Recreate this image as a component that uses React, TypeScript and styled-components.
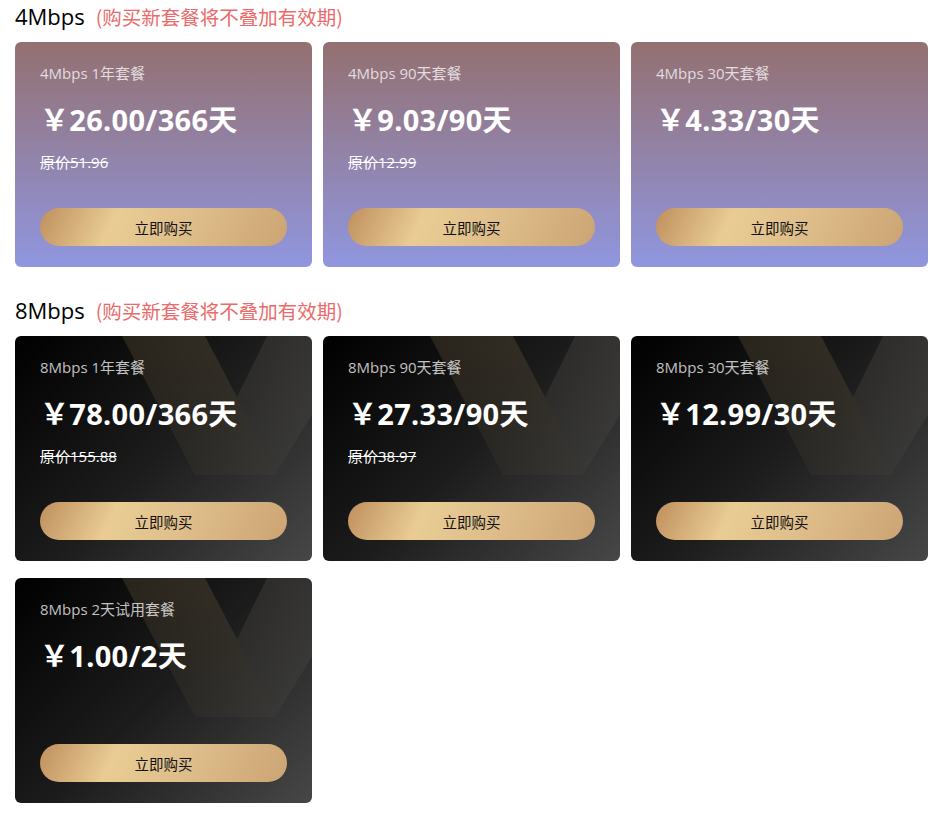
import React from "react";
import styled, { createGlobalStyle, css } from "styled-components";

const GlobalStyle = createGlobalStyle`
  html, body { margin: 0; padding: 0; background: #fff; }
  body { font-family: "Open Sans", "Noto Sans CJK SC", sans-serif; }
`;

const Page = styled.div`
  padding: 0 15px 17px;
  display: flex;
  flex-direction: column;
  gap: 27px;
`;

const Section = styled.section`
  display: flex;
  flex-direction: column;
  gap: 10px;
`;

const SectionTitle = styled.div`
  display: flex;
  align-items: center;
  height: 32px;
  font-size: 22px;
  color: #000;
`;

const Notice = styled.span`
  margin-left: 11px;
  font-family: "Noto Sans CJK SC", sans-serif;
  font-size: 19.5px;
  color: #ea6b6b;
`;

const Grid = styled.div`
  display: grid;
  grid-template-columns: repeat(3, 1fr);
  column-gap: 11px;
  row-gap: 17px;
`;

const Card = styled.div<{ $variant: "purple" | "dark" }>`
  position: relative;
  overflow: hidden;
  height: 225px;
  box-sizing: border-box;
  padding: 21px 25px 21px;
  border-radius: 6px;
  display: flex;
  flex-direction: column;
  ${(p) =>
    p.$variant === "purple"
      ? css`
          background: linear-gradient(180deg, #947070 0%, #9096e0 100%);
        `
      : css`
          background: linear-gradient(135deg, #000 0%, #1c1c1c 50%, #474747 100%);
        `}
`;

const Decor = styled.svg`
  position: absolute;
  top: 0;
  left: 0;
  width: 297px;
  height: 225px;
  pointer-events: none;
`;

const Content = styled.div`
  position: relative;
  display: flex;
  flex-direction: column;
  flex: 1;
`;

const PlanName = styled.div`
  font-size: 15px;
  line-height: 20px;
  color: rgba(255, 255, 255, 0.75);
`;

const Price = styled.div`
  margin-top: 17px;
  font-size: 29px;
  letter-spacing: 0.3px;
  line-height: 40px;
  font-weight: 700;
  color: #fff;
  font-family: "Noto Sans", "Noto Sans CJK SC", sans-serif;
`;

const OldPrice = styled.div`
  margin-top: 12px;
  font-size: 15px;
  line-height: 20px;
  color: #fff;
  text-decoration: line-through;
`;

const BuyButton = styled.button`
  margin-top: auto;
  height: 38px;
  width: 100%;
  border: none;
  border-radius: 19px;
  background: linear-gradient(115deg, #bf8f5e 0%, #e9cc94 30%, #ddbc89 62%, #cca473 100%);
  font-family: "Noto Sans CJK SC", sans-serif;
  font-size: 14.5px;
  color: #111;
  cursor: pointer;
`;

type Plan = { name: string; price: string; old?: string };

const DarkDecor = () => (
  <Decor viewBox="0 0 297 225">
    <defs>
      <linearGradient id="goldArm" x1="0" y1="0" x2="0" y2="1">
        <stop offset="0" stopColor="#c8a870" stopOpacity="0.16" />
        <stop offset="1" stopColor="#c8a870" stopOpacity="0.04" />
      </linearGradient>
      <linearGradient id="grayArm" x1="0" y1="0" x2="0" y2="1">
        <stop offset="0" stopColor="#d8cfb8" stopOpacity="0.1" />
        <stop offset="1" stopColor="#d8cfb8" stopOpacity="0.03" />
      </linearGradient>
    </defs>
    <polygon points="107,0 190,0 222,61 260,139 180,139" fill="url(#goldArm)" />
    <polygon points="252,0 345,0 260,139 222,61" fill="url(#grayArm)" />
  </Decor>
);

const PlanCard = ({ plan, variant }: { plan: Plan; variant: "purple" | "dark" }) => (
  <Card $variant={variant}>
    {variant === "dark" && <DarkDecor />}
    <Content>
      <PlanName>{plan.name}</PlanName>
      <Price>￥{plan.price}</Price>
      {plan.old && <OldPrice>原价{plan.old}</OldPrice>}
      <BuyButton>立即购买</BuyButton>
    </Content>
  </Card>
);

const sections: { title: string; variant: "purple" | "dark"; plans: Plan[] }[] = [
  {
    title: "4Mbps",
    variant: "purple",
    plans: [
      { name: "4Mbps 1年套餐", price: "26.00/366天", old: "51.96" },
      { name: "4Mbps 90天套餐", price: "9.03/90天", old: "12.99" },
      { name: "4Mbps 30天套餐", price: "4.33/30天" },
    ],
  },
  {
    title: "8Mbps",
    variant: "dark",
    plans: [
      { name: "8Mbps 1年套餐", price: "78.00/366天", old: "155.88" },
      { name: "8Mbps 90天套餐", price: "27.33/90天", old: "38.97" },
      { name: "8Mbps 30天套餐", price: "12.99/30天" },
      { name: "8Mbps 2天试用套餐", price: "1.00/2天" },
    ],
  },
];

export default function App() {
  return (
    <Page>
      <GlobalStyle />
      {sections.map((s) => (
        <Section key={s.title}>
          <SectionTitle>
            {s.title}
            <Notice>(购买新套餐将不叠加有效期)</Notice>
          </SectionTitle>
          <Grid>
            {s.plans.map((p) => (
              <PlanCard key={p.name} plan={p} variant={s.variant} />
            ))}
          </Grid>
        </Section>
      ))}
    </Page>
  );
}
